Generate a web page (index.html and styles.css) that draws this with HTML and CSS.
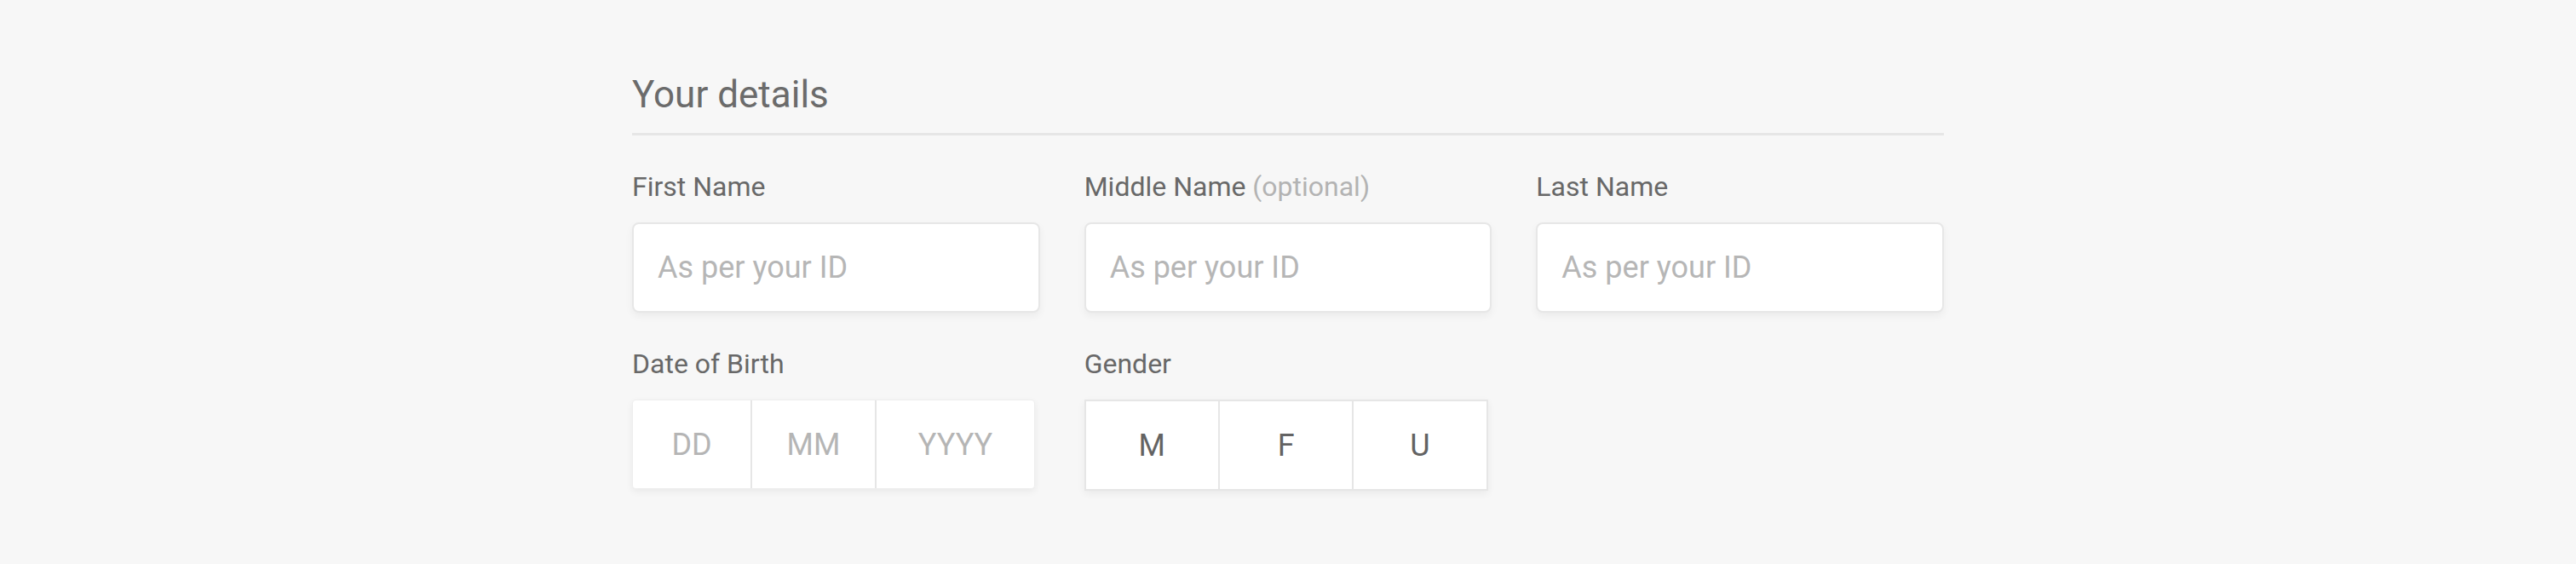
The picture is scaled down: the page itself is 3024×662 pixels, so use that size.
FILE: index.html
```html
<!DOCTYPE html>
<html lang="en">
<head>
<meta charset="utf-8">
<title>Your details</title>
<link rel="stylesheet" href="styles.css">
</head>
<body>
<main class="page">
  <section class="details">
    <h1 class="title">Your details</h1>
    <div class="row">
      <div class="field">
        <label class="label">First Name</label>
        <div class="input"><span class="placeholder">As per your ID</span></div>
      </div>
      <div class="field">
        <label class="label">Middle Name <span class="optional">(optional)</span></label>
        <div class="input"><span class="placeholder">As per your ID</span></div>
      </div>
      <div class="field">
        <label class="label">Last Name</label>
        <div class="input"><span class="placeholder">As per your ID</span></div>
      </div>
    </div>
    <div class="row row-second">
      <div class="field">
        <label class="label">Date of Birth</label>
        <div class="dob">
          <div class="seg seg-dd">DD</div>
          <div class="seg seg-mm">MM</div>
          <div class="seg seg-yyyy">YYYY</div>
        </div>
      </div>
      <div class="field">
        <label class="label">Gender</label>
        <div class="gender">
          <div class="opt">M</div>
          <div class="opt">F</div>
          <div class="opt">U</div>
        </div>
      </div>
    </div>
  </section>
</main>
</body>
</html>
```

FILE: styles.css
```css
* { box-sizing: border-box; }

html, body {
  margin: 0;
  padding: 0;
  background: #f7f7f7;
}

body {
  font-family: Roboto, "Liberation Sans", Arial, sans-serif;
  color: #666666;
  height: 662px;
  overflow: hidden;
}

.page {
  display: flex;
  justify-content: center;
  padding-top: 85px;
}

.details {
  width: 1540px;
}

.title {
  margin: 0;
  font-size: 44px;
  line-height: 52px;
  font-weight: 400;
  color: #6b6b6b;
  padding-bottom: 19px;
  border-bottom: 3px solid #e6e6e6;
}

.row {
  display: grid;
  grid-template-columns: repeat(3, 1fr);
  column-gap: 52px;
  margin-top: 40px;
}

.row-second {
  margin-top: 40px;
}

.field {
  display: flex;
  flex-direction: column;
}

.label {
  font-size: 32px;
  line-height: 40px;
  color: #686868;
  margin-bottom: 22px;
  white-space: nowrap;
}

.optional {
  color: #b3b3b3;
}

.input {
  height: 106px;
  background: #ffffff;
  border: 2px solid #e7e7e7;
  border-radius: 8px;
  box-shadow: 0 4px 10px rgba(0, 0, 0, 0.05);
  display: flex;
  align-items: center;
  padding-left: 28px;
}

.placeholder {
  font-size: 36px;
  color: #b6b6b6;
}

.dob {
  display: flex;
  width: 473px;
  height: 105px;
  background: #ffffff;
  border: 1px solid #eeeeee;
  border-radius: 4px;
  box-shadow: 0 3px 9px rgba(0, 0, 0, 0.06);
}

.seg {
  display: flex;
  align-items: center;
  justify-content: center;
  font-size: 36px;
  color: #b5b5b5;
  border-right: 2px solid #e6e6e6;
}

.seg:last-child { border-right: none; }

.seg-dd { width: 140px; }
.seg-mm { width: 146px; }
.seg-yyyy { flex: 1; }

.gender {
  display: flex;
  width: 474px;
  height: 107px;
  background: #ffffff;
  border: 2px solid #e6e6e6;
  box-shadow: 0 3px 9px rgba(0, 0, 0, 0.06);
}

.opt {
  flex: 1;
  display: flex;
  align-items: center;
  justify-content: center;
  font-size: 36px;
  color: #636363;
  border-right: 2px solid #e6e6e6;
}

.opt:last-child { border-right: none; }
```
